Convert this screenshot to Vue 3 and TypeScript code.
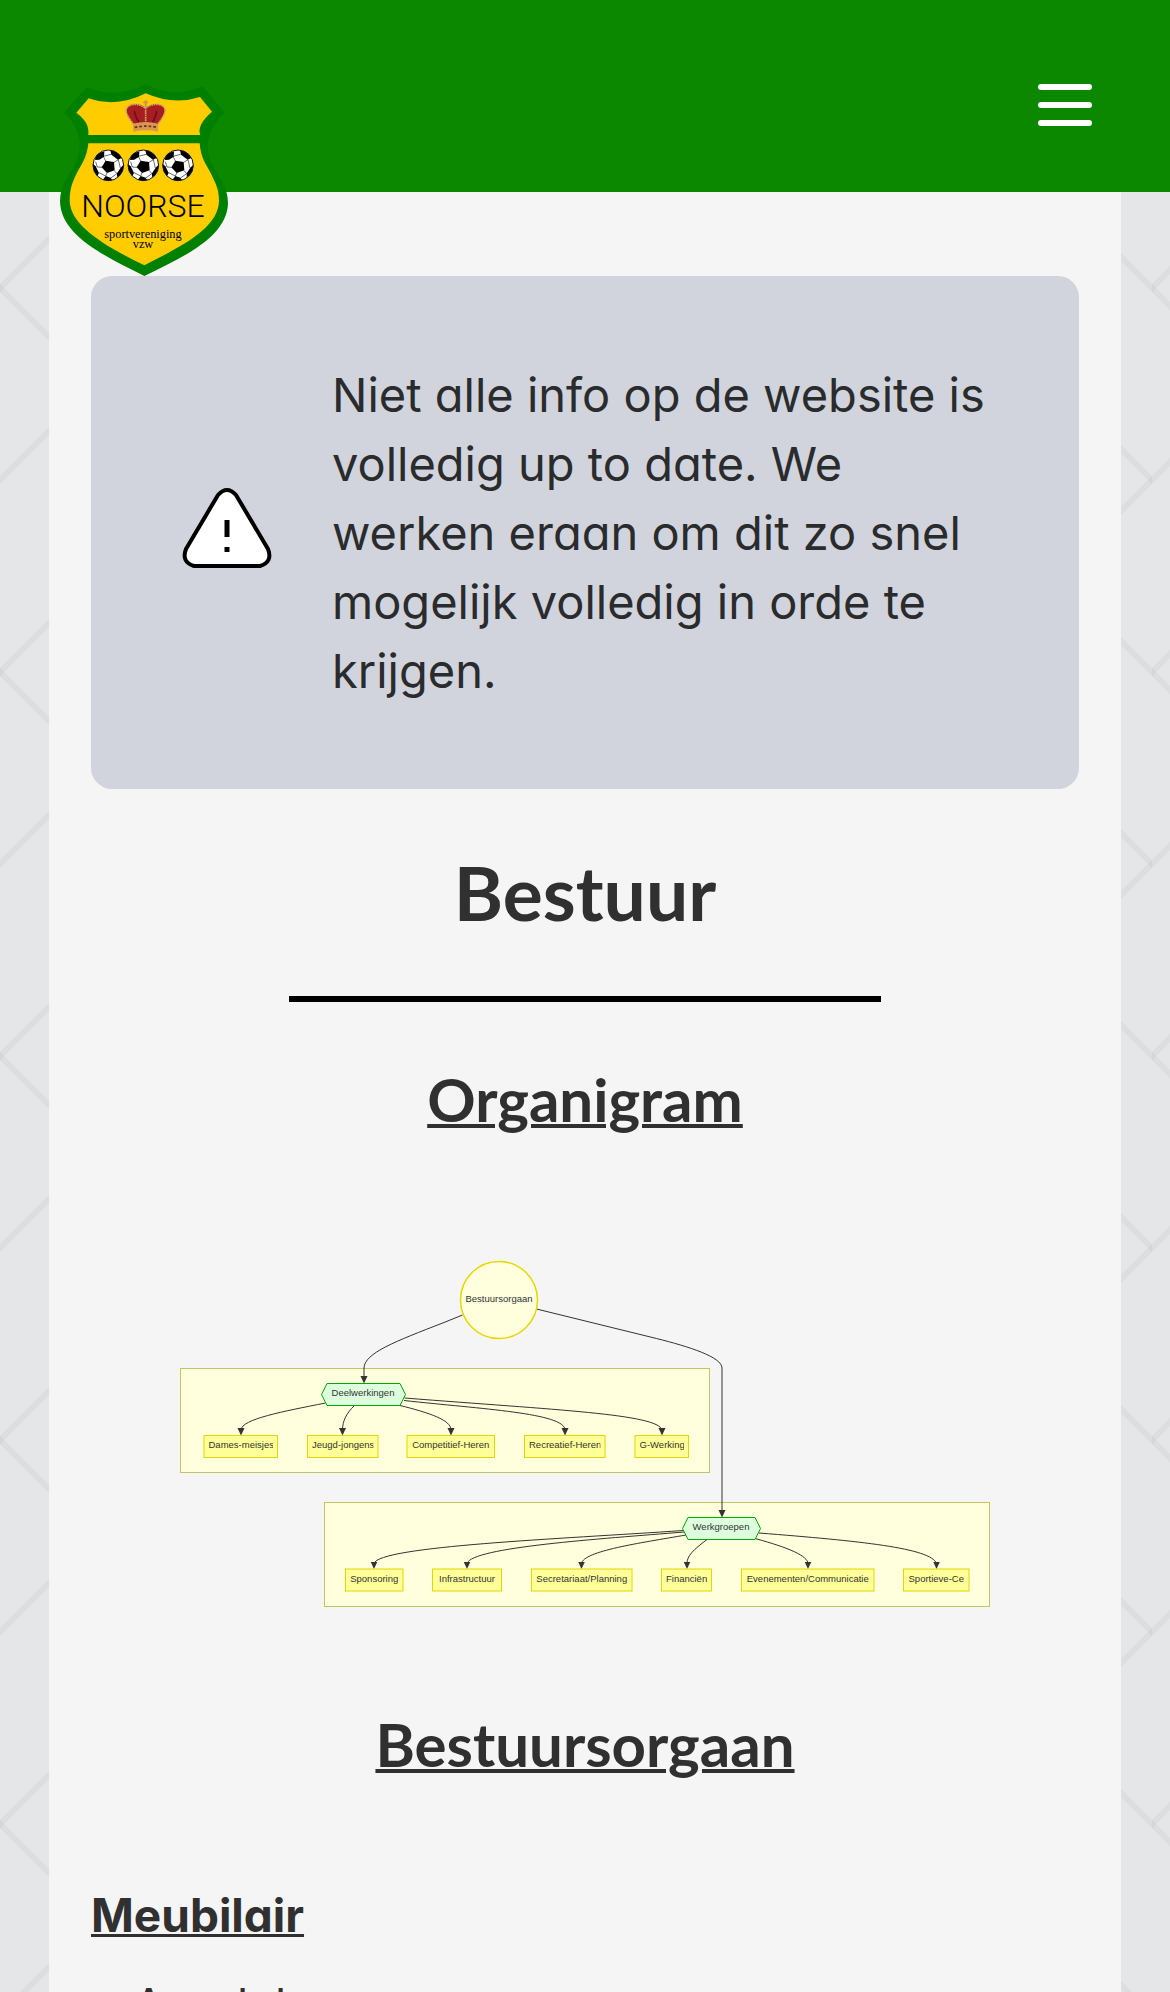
<script setup lang="ts">
interface OrgNode {
  label: string
  x: number
  y: number
  width: number
}

interface Group {
  x: number
  y: number
  width: number
  height: number
}

const nodeHeight = 44
const labelInset = 9

const groups: Group[] = [
  { x: 179, y: 257, width: 1058, height: 208 },
  { x: 467, y: 525, width: 1330, height: 208 },
]

const nodes: OrgNode[] = [
  { label: 'Dames-meisjes', x: 226, y: 391, width: 147 },
  { label: 'Jeugd-jongens', x: 433, y: 391, width: 141 },
  { label: 'Competitief-Heren', x: 632, y: 391, width: 175 },
  { label: 'Recreatief-Heren', x: 867, y: 391, width: 161 },
  { label: 'G-Werking', x: 1088, y: 391, width: 107 },
  { label: 'Sponsoring', x: 509, y: 658, width: 115 },
  { label: 'Infrastructuur', x: 683, y: 658, width: 138 },
  { label: 'Secretariaat/Planning', x: 881, y: 658, width: 201 },
  { label: 'Financiën', x: 1141, y: 658, width: 100 },
  { label: 'Evenementen/Communicatie', x: 1301, y: 658, width: 265 },
  { label: 'Sportieve-Ce', x: 1625, y: 658, width: 131 },
]

const hubs: OrgNode[] = [
  { label: 'Deelwerkingen', x: 461, y: 287, width: 168 },
  { label: 'Werkgroepen', x: 1183, y: 555, width: 156 },
]

const edges: string[] = [
  'M743 150 L706 165 C608 203 547 226 546 256 V276',
  'M891 138 L1131 197 C1195 213 1262 234 1262 256 V544',
  'M469 326 C384 343 301 358 300 380',
  'M527 331 C511 346 503 362 503 380',
  'M618 331 C678 346 720 360 720 380',
  'M626 321 C780 338 948 346 948 380',
  'M627 316 C930 340 1134 348 1142 380',
  'M1185 581 C938 598 576 612 566 647',
  'M1186 584 C1018 598 762 614 752 647',
  'M1190 590 C1098 606 985 622 981 647',
  'M1232 599 C1204 620 1192 632 1192 647',
  'M1328 597 C1398 616 1433 632 1434 647',
  'M1336 586 C1538 602 1680 616 1691 647',
]

function hexagon(hub: OrgNode): string {
  const right = hub.x + hub.width
  const middle = hub.y + nodeHeight / 2
  const bottom = hub.y + nodeHeight
  return `${hub.x},${middle} ${hub.x + 11},${hub.y} ${right - 11},${hub.y} ${right},${middle} ${right - 11},${bottom} ${hub.x + 11},${bottom}`
}

const balls: number[] = [205, 310, 414]
const furniture: string[] = ['Aandelen']
</script>

<template>
  <div class="page">
    <header class="header">
      <a class="logo" href="#" aria-label="Noorse sportvereniging vzw">
        <svg viewBox="60 41 504 576">
          <defs>
            <clipPath id="ball-edge"><circle r="46" /></clipPath>
          </defs>
          <path fill="#008000" d="M141 50 Q228 88 317 41 Q400 86 488 47 L553 127 C500 180 490 238 520 291 C546 332 564 358 564 400 C560 500 430 560 313 617 C190 555 62 495 60 392 C62 345 78 330 98 295 C130 240 130 183 72 127 Z" />
          <path fill="#ffcc00" d="M146 84 Q232 113 317 69 Q400 106 480 80 L516 124 C485 150 473 175 481 194 L145 194 C148 165 135 147 109 127 Z" />
          <path fill="#ffcc00" d="M145 219 L479 219 C482 262 497 280 512 308 C527 340 537 355 537 393 C533 475 430 525 313 585 C190 525 92 465 89 392 C89 350 100 330 115 300 C132 272 142 250 145 219 Z" />
          <g>
            <path fill="#a61e22" d="M281 163 C262 140 252 118 266 108 C280 96 304 102 317 112 C330 102 354 96 368 108 C382 118 370 142 352 163 Z" />
            <path fill="none" stroke="#d9a066" stroke-width="5" stroke-dasharray="5 2" d="M282 163 C260 136 250 118 266 107 C282 97 304 103 316 114 C330 103 352 97 368 107 C384 118 372 138 352 163 M317 112 V160" />
            <path fill="none" stroke="#6e1014" stroke-width="5" d="M283 122 Q288 145 297 156 M350 122 Q346 145 337 156" />
            <path fill="#d39a52" d="M279 160 Q317 150 355 160 L354 184 Q317 176 280 184 Z" />
            <path fill="none" stroke="#84251b" stroke-width="5" stroke-dasharray="8 6" d="M284 171 Q317 164 351 171" />
            <path fill="none" stroke="#c69255" stroke-width="5" d="M317 90 V110 M310 96 H324" />
          </g>
          <g v-for="cx in balls" :key="cx" :transform="`translate(${cx} 285)`">
            <circle r="46" fill="#fff" />
            <g clip-path="url(#ball-edge)">
              <g fill="none" stroke="#222" stroke-width="2">
                <path d="M-8 -13 L-15 -27 M17 -9 L30 -17 M18 16 L26 25 M-4 23 L-8 32 M-19 6 L-33 5 M-15 -27 L8 -33 M30 -17 L36 8 M26 25 L7 38 M-8 32 L-28 22 M-33 5 L-38 -11" />
              </g>
              <path d="M-8 -14 L17 -10 L19 15 L-4 23 L-20 6 Z" />
              <path d="M-36 -34 L-12 -42 L-13 -26 L-27 -17 L-40 -16 Z" />
              <path d="M6 -46 L34 -38 L40 -22 L29 -17 L9 -32 Z" />
              <path d="M37 7 L48 -4 L46 26 L26 35 L26 24 Z" />
              <path d="M-8 32 L7 37 L14 48 L-20 48 Z" />
              <path d="M-48 -6 L-38 3 L-28 23 L-34 34 L-50 20 Z" />
            </g>
            <circle r="46" fill="none" stroke="#111" stroke-width="3" />
          </g>
          <text class="logo-name" x="309" y="439">NOORSE</text>
          <text class="logo-type" x="309" y="504">sportvereniging</text>
          <text class="logo-type" x="309" y="533">vzw</text>
        </svg>
      </a>
      <button class="menu" type="button" aria-label="Menu">
        <span></span>
        <span></span>
        <span></span>
      </button>
    </header>

    <main class="content">
      <div class="alert" role="alert">
        <svg class="alert-icon" viewBox="0 0 90 90" aria-hidden="true">
          <path d="M36 7 Q45 -3 54 7 L86 61 Q91 74 78 78 H12 Q-1 74 4 61 Z" fill="#fff" stroke="#000" stroke-width="4" stroke-linejoin="round" />
          <path d="M45 32 V49 M45 59 V64" stroke="#000" stroke-width="5" />
        </svg>
        <p class="alert-text">
          Niet alle info op de website is volledig up to date. We werken eraan om dit zo snel mogelijk volledig in orde te krijgen.
        </p>
      </div>

      <h1 class="title">Bestuur</h1>
      <hr class="rule">

      <h2 class="section-title">Organigram</h2>
      <svg class="chart" viewBox="0 0 1976 780" role="img" aria-label="Organigram">
        <defs>
          <marker id="arrow" viewBox="0 0 15 15" refX="4" refY="7" markerWidth="15" markerHeight="15" markerUnits="userSpaceOnUse" orient="90">
            <path d="M0 0 L15 7 L0 14 Z" fill="#333" />
          </marker>
        </defs>
        <rect v-for="group in groups" :key="group.y" class="group" :x="group.x" :y="group.y" :width="group.width" :height="group.height" />
        <path v-for="edge in edges" :key="edge" class="edge" :d="edge" marker-end="url(#arrow)" />
        <circle class="root" cx="816" cy="120" r="77" />
        <foreignObject x="742" y="104" width="148" height="28">
          <div class="node-label">Bestuursorgaan</div>
        </foreignObject>
        <g v-for="hub in hubs" :key="hub.label">
          <polygon class="hub" :points="hexagon(hub)" />
          <foreignObject :x="hub.x + 18" :y="hub.y + 5" :width="hub.width - 38" height="28">
            <div class="node-label">{{ hub.label }}</div>
          </foreignObject>
        </g>
        <g v-for="node in nodes" :key="node.label">
          <rect class="node" :x="node.x" :y="node.y" :width="node.width" :height="nodeHeight" />
          <foreignObject :x="node.x + labelInset" :y="node.y + 5" :width="node.width - 2 * labelInset" height="28">
            <div class="node-label">{{ node.label }}</div>
          </foreignObject>
        </g>
      </svg>

      <h2 class="section-title">Bestuursorgaan</h2>
      <h3 class="subject">Meubilair</h3>
      <ul class="list">
        <li v-for="item in furniture" :key="item">{{ item }}</li>
      </ul>
    </main>
  </div>
</template>

<style>
body {
  margin: 0;
}
</style>

<style scoped>
.page {
  height: 100vh;
  overflow: hidden;
  color: #303030;
  font-family: Inter, "Open Sans", sans-serif;
  font-feature-settings: "cv11";
  background-color: #e5e6e8;
  background-image: url("data:image/svg+xml,%3Csvg xmlns='http://www.w3.org/2000/svg' width='384' height='384'%3E%3Cg stroke='%23000' stroke-opacity='.035' stroke-width='6'%3E%3Cpath d='M-10 106L106 -10'/%3E%3Cpath d='M-10 298L96 192'/%3E%3Cpath d='M-10 278L106 394'/%3E%3Cpath d='M394 106L278 -10'/%3E%3Cpath d='M394 86L288 192'/%3E%3Cpath d='M394 298L288 192'/%3E%3C/g%3E%3C/svg%3E");
}

.header {
  position: relative;
  z-index: 1;
  display: flex;
  justify-content: space-between;
  align-items: flex-start;
  box-sizing: border-box;
  height: 192px;
  padding: 84px 78px 0 60px;
  background: #0b8800;
}

.logo svg {
  display: block;
  width: 168px;
  height: 192px;
}

.logo-name {
  font: 300 96px Roboto, sans-serif;
  text-anchor: middle;
}

.logo-type {
  font: 37px "Liberation Serif", serif;
  text-anchor: middle;
}

.menu {
  display: flex;
  flex-direction: column;
  gap: 12px;
  width: 54px;
  padding: 0;
  border: 0;
  background: none;
}

.menu span {
  width: 100%;
  height: 6px;
  border-radius: 3px;
  background: #fff;
}

.content {
  margin: 0 49px;
  padding: 84px 42px;
  background: #f5f5f5;
}

.alert {
  display: flex;
  align-items: center;
  gap: 60px;
  padding: 84px 84px 84px 91px;
  border-radius: 21px;
  background: #d1d4dc;
}

.alert-icon {
  flex: none;
  width: 90px;
  height: 90px;
}

.alert-text {
  margin: 0;
  color: #2a2b2c;
  font-size: 47px;
  line-height: 69px;
}

.title {
  margin: 58px 0 59px;
  font: 700 75px/90px Lato, sans-serif;
  text-align: center;
}

.rule {
  width: 60%;
  height: 6px;
  margin: 0 auto;
  border: 0;
  background: #000;
}

.section-title {
  margin: 61px 0 0;
  font: 700 60px/72px Lato, sans-serif;
  text-align: center;
  text-decoration: underline 4px;
}

.chart {
  display: block;
  width: 100%;
  margin: 105px 0 78px;
}

.group {
  fill: #ffffde;
  stroke: #c4c462;
  stroke-width: 2;
}

.edge {
  fill: none;
  stroke: #333;
  stroke-width: 2;
}

.root {
  fill: #ffffde;
  stroke: #e6d800;
  stroke-width: 3;
}

.node {
  fill: #ffff99;
  stroke: #e2d600;
  stroke-width: 2;
}

.hub {
  fill: #ddffdd;
  stroke: #00aa00;
  stroke-width: 2;
}

.node-label {
  overflow: hidden;
  color: #333;
  font: 19px/28px "Liberation Sans", Arial, sans-serif;
  text-align: center;
  white-space: nowrap;
}

.subject {
  margin: 101px 0 0;
  font-size: 46px;
  font-weight: 700;
  line-height: 69px;
  text-decoration: underline 3px;
}

.list {
  margin: 21px 0 0;
  padding-left: 42px;
  font-size: 46px;
  line-height: 69px;
  list-style: none;
}
</style>
